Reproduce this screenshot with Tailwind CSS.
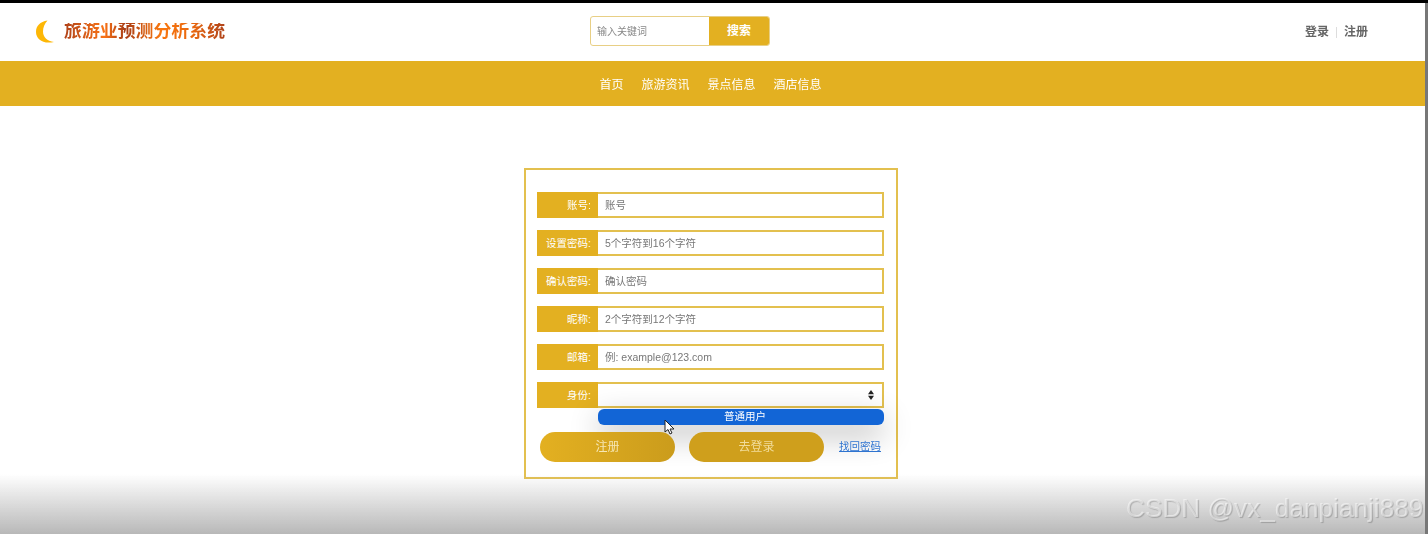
<!DOCTYPE html>
<html lang="zh-CN">
<head>
  <meta charset="UTF-8" />
  <title>旅游业预测分析系统</title>
  <script src="https://cdn.jsdelivr.net/npm/@tailwindcss/browser@4"></script>
</head>
<body class="relative w-[1428px] h-[534px] overflow-hidden bg-white font-['Liberation_Sans','Noto_Sans_CJK_SC',sans-serif]">

  <div class="blur-[0.5px]">
    <!-- top bar -->
    <div class="h-[3px] bg-black"></div>

    <header class="flex items-center h-[58px] pl-[36px] pr-[60px]">
      <div class="flex items-center w-[554px] gap-[10px]">
        <svg width="18" height="24" viewBox="0 0 18 24">
          <path d="M11.5 0.5 C4 1.5 0 6 0 12 C0 19 7 24.5 18 22 C11 21 7 17 7 11.5 C7 7.5 8.5 3.5 11.5 0.5 Z" fill="#fdb706" />
        </svg>
        <span class="text-[17.9px] font-bold leading-none bg-[linear-gradient(90deg,#b0431a_0%,#f97316_25%,#a83c15_38%,#f9770f_60%,#e8670f_80%,#b0431a_100%)] bg-clip-text text-transparent">旅游业预测分析系统</span>
      </div>

      <form class="flex w-[180px] h-[30px] mb-[2px] rounded-[3px] border border-[#e8cf85] overflow-hidden">
        <input type="text" placeholder="输入关键词" class="w-[118px] pl-[6px] text-[10px] outline-none placeholder:text-[#888]" />
        <button type="button" class="flex-1 bg-[#e3b021] text-white text-[12px] font-bold">搜索</button>
      </form>

      <div class="ml-auto flex items-center text-[12px] font-bold text-[#666]">
        <a href="#">登录</a>
        <span class="w-px h-[11px] bg-[#ddd] mx-[7px]"></span>
        <a href="#">注册</a>
      </div>
    </header>

    <nav class="flex justify-center items-center gap-[18px] h-[45px] pt-[2px] pr-[7px] bg-[#e3b021] text-white text-[12px]">
      <a href="#">首页</a>
      <a href="#">旅游资讯</a>
      <a href="#">景点信息</a>
      <a href="#">酒店信息</a>
    </nav>

    <main class="flex justify-center pt-[62px] pr-[6px]">
      <form class="flex flex-col gap-[12px] w-[374px] h-[311px] pt-[22px] pl-[11px] pr-[12px] border-2 border-[#e3c04f]">
        <div class="flex h-[26px]">
          <label class="flex justify-end items-center w-[61px] pt-px pr-[7px] bg-[#e3b021] text-white text-[10.5px]">账号:</label>
          <input type="text" placeholder="账号" class="flex-1 pt-px pl-[7px] border-2 border-l-0 border-[#e3c04f] text-[10.5px] outline-none placeholder:text-[#777]" />
        </div>
        <div class="flex h-[26px]">
          <label class="flex justify-end items-center w-[61px] pt-px pr-[7px] bg-[#e3b021] text-white text-[10.5px]">设置密码:</label>
          <input type="text" placeholder="5个字符到16个字符" class="flex-1 pt-px pl-[7px] border-2 border-l-0 border-[#e3c04f] text-[10.5px] outline-none placeholder:text-[#777]" />
        </div>
        <div class="flex h-[26px]">
          <label class="flex justify-end items-center w-[61px] pt-px pr-[7px] bg-[#e3b021] text-white text-[10.5px]">确认密码:</label>
          <input type="text" placeholder="确认密码" class="flex-1 pt-px pl-[7px] border-2 border-l-0 border-[#e3c04f] text-[10.5px] outline-none placeholder:text-[#777]" />
        </div>
        <div class="flex h-[26px]">
          <label class="flex justify-end items-center w-[61px] pt-px pr-[7px] bg-[#e3b021] text-white text-[10.5px]">昵称:</label>
          <input type="text" placeholder="2个字符到12个字符" class="flex-1 pt-px pl-[7px] border-2 border-l-0 border-[#e3c04f] text-[10.5px] outline-none placeholder:text-[#777]" />
        </div>
        <div class="flex h-[26px]">
          <label class="flex justify-end items-center w-[61px] pt-px pr-[7px] bg-[#e3b021] text-white text-[10.5px]">邮箱:</label>
          <input type="text" placeholder="例: example@123.com" class="flex-1 pt-px pl-[7px] border-2 border-l-0 border-[#e3c04f] text-[10.5px] outline-none placeholder:text-[#777]" />
        </div>
        <div class="relative flex h-[26px]">
          <label class="flex justify-end items-center w-[61px] pt-px pr-[7px] bg-[#e3b021] text-white text-[10.5px]">身份:</label>
          <div class="flex-1 flex justify-end items-center pr-[8px] border-2 border-l-0 border-[#e3c04f]">
            <svg width="6" height="10" viewBox="0 0 6 10" fill="#222">
              <path d="M3 0 L6 4.2 L0 4.2 Z" />
              <path d="M3 10 L6 5.8 L0 5.8 Z" />
            </svg>
          </div>
          <!-- open dropdown -->
          <div class="absolute left-[61px] top-[27px] w-[286px] h-[16px] rounded-[6px] bg-[#1265d6] text-white text-[10.5px] leading-[15px] pl-[126px] shadow-[0_10px_30px_rgba(0,0,0,0.3)]">普通用户</div>
        </div>

        <div class="relative flex items-center h-[30px] mt-[12px] pl-[3px]">
          <button type="button" class="w-[135px] h-[30px] rounded-full bg-linear-to-r from-[#e3b021] to-[#cb9c1c] text-[#f6e7b5] text-[12px]">注册</button>
          <button type="button" class="w-[135px] h-[30px] ml-[14px] rounded-full bg-[#cf9f1c] text-[#f1dc9a] text-[12px]">去登录</button>
          <a href="#" class="ml-[15px] text-[10.5px] text-[#2f74d0] underline">找回密码</a>
        </div>
      </form>
    </main>
  </div>

  <!-- cursor over the dropdown -->
  <svg class="absolute left-[664px] top-[419px]" width="11" height="16" viewBox="0 0 11 16">
    <path d="M1 1 L1 13 L4 10.5 L6 15 L8 14 L6 10 L10 10 Z" fill="#fff" stroke="#222" stroke-width="1" />
  </svg>

  <!-- video fade and strip at the right edge -->
  <div class="absolute left-0 right-0 bottom-0 h-[60px] bg-linear-to-b from-[#b4b4b4]/0 to-[#b8b8b8] pointer-events-none"></div>
  <div class="absolute top-[3px] right-0 bottom-0 w-[3px] bg-[#777]"></div>

  <!-- watermark -->
  <div class="absolute left-[1126px] top-[492px] text-[26.2px] leading-[32px] whitespace-nowrap text-white/50 [text-shadow:1px_1px_1px_rgba(0,0,0,0.2)]">CSDN @vx_danpianji889</div>
</body>
</html>
